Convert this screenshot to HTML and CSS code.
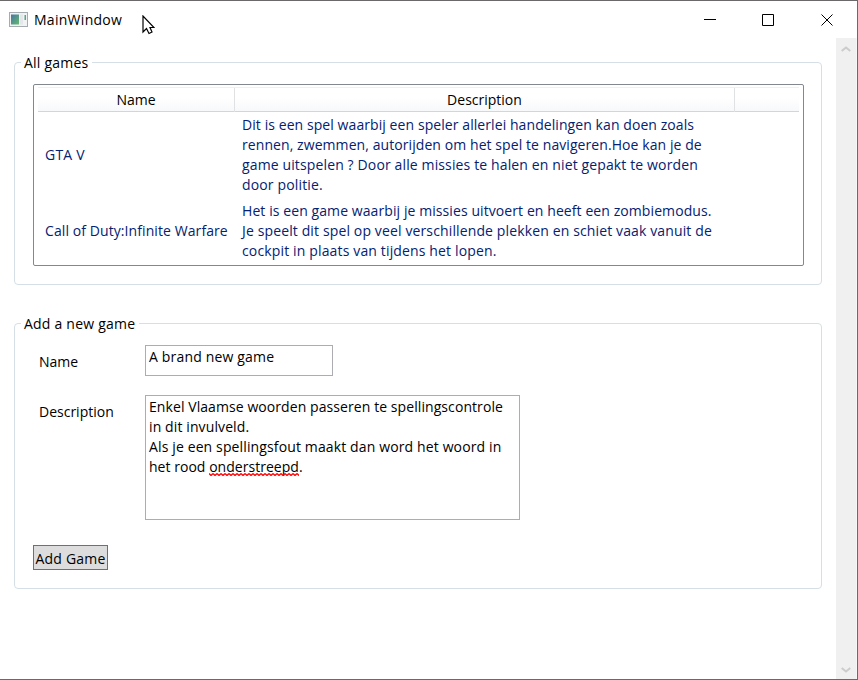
FILE: index.html
```html
<!DOCTYPE html>
<html lang="nl">
<head>
<meta charset="utf-8">
<title>MainWindow</title>
<link rel="stylesheet" href="styles.css">
</head>
<body>
<div class="window">
  <header class="titlebar">
    <svg class="app-icon" width="19" height="15" viewBox="0 0 19 15">
      <defs><linearGradient id="g" x1="0" y1="0" x2="1" y2="1"><stop offset="0" stop-color="#4776a4"/><stop offset="1" stop-color="#64b96e"/></linearGradient></defs>
      <rect x=".5" y=".5" width="18" height="14" fill="#f1f2f3" stroke="#a5abb1"/>
      <rect x="2" y="2.5" width="8" height="10" fill="url(#g)"/>
      <rect x="11" y="2.500" width="3" height="10" fill="#e4e7ea"/>
      <rect x="15.500" y="3" width="1.500" height="5" fill="#58a589"/>
    </svg>
    <span class="title">MainWindow</span>
    <div class="controls">
      <svg width="14" height="14" viewBox="0 0 14 14"><path d="M2 6.500h12"/></svg>
      <svg width="14" height="14" viewBox="0 0 14 14"><path d="M1.500 1.500h11v11h-11z"/></svg>
      <svg width="14" height="14" viewBox="0 0 14 14"><path d="M1.500 1.500l11 11M12.500 1.500l-11 11"/></svg>
    </div>
  </header>
  <div class="body">
    <main class="content">
      <fieldset class="group games">
        <legend>All games</legend>
        <div class="list">
          <div class="row head"><div>Name</div><div>Description</div><div></div></div>
          <div class="row item">
            <div><span class="l0">GTA V</span></div>
            <div class="desc">
              <span class="l1">Dit is een spel waarbij een speler allerlei handelingen kan doen zoals</span>
              <span class="l2">rennen, zwemmen, autorijden om het spel te navigeren.Hoe kan je de</span>
              <span class="l3">game uitspelen ? Door alle missies te halen en niet gepakt te worden</span>
              <span class="l4">door politie.</span>
            </div>
          </div>
          <div class="row item">
            <div><span class="l5">Call of Duty:Infinite Warfare</span></div>
            <div class="desc">
              <span class="l6">Het is een game waarbij je missies uitvoert en heeft een zombiemodus.</span>
              <span class="l7">Je speelt dit spel op veel verschillende plekken en schiet vaak vanuit de</span>
              <span class="l8">cockpit in plaats van tijdens het lopen.</span>
            </div>
          </div>
        </div>
      </fieldset>
      <fieldset class="group add">
        <legend>Add a new game</legend>
        <div class="form">
          <label>Name</label>
          <div class="box name-box"><span class="l9">A brand new game</span></div>
          <label>Description</label>
          <div class="box desc-box">
            <span class="l10">Enkel Vlaamse woorden passeren te spellingscontrole</span>
            <span class="l11">in dit invulveld.</span>
            <span class="l12">Als je een spellingsfout maakt dan word het woord in</span>
            <span class="l13">het rood <span class="typo">onderstreepd<svg class="squiggle" width="90" height="3"><defs><pattern id="wave" width="4" height="3" patternUnits="userSpaceOnUse"><path d="M0 .5L2 2.500L4 .5"/></pattern></defs><rect width="90" height="3" fill="url(#wave)"/></svg></span>.</span>
          </div>
        </div>
        <button class="add-button" type="button">Add Game</button>
      </fieldset>
    </main>
    <aside class="scrollbar">
      <svg width="10" height="6" viewBox="0 0 10 6"><path d="M.7 5L5 1.500L9.300 5"/></svg>
      <svg width="10" height="6" viewBox="0 0 10 6"><path d="M.7 1L5 4.500L9.300 1"/></svg>
    </aside>
  </div>
  <svg class="cursor" width="13" height="20" viewBox="0 0 13 20"><path d="M1 1v16l3.500-3.500 2.500 5 3-1.500-2-4.500h4z"/></svg>
</div>
</body>
</html>
```
FILE: styles.css
```css
* { box-sizing: border-box; }
body {
  margin: 0;
  font: 14px/20px "Open Sans", "Noto Sans", sans-serif;
  color: #000;
  background: #fff;
}
.window {
  position: relative;
  display: flex;
  flex-direction: column;
  width: 858px;
  height: 680px;
  border: solid #6b6969;
  border-width: 1px 1px 1px 0;
  overflow: hidden;
}
.titlebar { display: flex; align-items: center; height: 37px; padding: 0 23px 0 9px; }
.title { margin-left: 6px; letter-spacing: .28px; }
.controls { display: flex; gap: 45px; margin-left: auto; }
.controls path { fill: none; stroke: #000; }
.body { display: flex; flex: 1; }
.content { flex: 1; padding: 15px 14px 0; }
.group {
  min-width: 0;
  margin: 0;
  padding: 0 17px 0 6px;
  border: 1px solid #d5dfe5;
  border-radius: 4px;
}
legend { padding: 0 4px 0 3px; height: 19px; letter-spacing: .22px; }
.games { height: 232px; }
.list {
  width: 771px;
  height: 182px;
  margin: 12px 0 0 12px;
  padding: 2px 4px;
  border: 1px solid #828790;
  border-radius: 2px;
}
.row { display: grid; grid-template-columns: 197px 500px 1fr; }
.head {
  height: 25px;
  border-top: 1px solid #f0f0f0;
  border-bottom: 1px solid #d5d5d5;
  background: linear-gradient(#fff 40%, #f7f8fa);
  text-align: center;
}
.head > div { border-right: 1px solid #dfe1e3; line-height: 24px; }
.head > div:last-child { border: 0; }
.item { color: #042271; align-items: center; padding: 3px 0 0 7px; }
.item + .item { padding-top: 6px; }
.desc, .desc-box { display: flex; flex-direction: column; align-items: flex-start; }
.item span, .box span { white-space: nowrap; }
.add { height: 275px; margin-top: 29px; }
.form {
  display: grid;
  grid-template-columns: 106px 375px;
  grid-template-rows: 31px 125px;
  row-gap: 19px;
  margin: 12px 0 0 18px;
}
.form label { padding-top: 7px; }
.box { border: 1px solid #abadb3; padding: 1px 3px; }
.name-box { width: 188px; }

/* Per-line tracking */
.l0 { letter-spacing: .2px; }
.l1, .l2, .l10 { letter-spacing: .077px; }
.l5, .l6 { letter-spacing: .085px; }
.l11 { letter-spacing: .11px; }
.l3, .l7, .l12 { letter-spacing: .13px; }
.l4, .l8 { letter-spacing: .145px; }
.l9 { letter-spacing: .17px; }
.l13 { letter-spacing: .03px; }

.typo { position: relative; }
.squiggle { position: absolute; left: 0; top: 16px; }
.squiggle path { fill: none; stroke: #f00; stroke-width: 1.3; }
.add-button {
  display: block;
  width: 75px;
  height: 25px;
  margin: 25px 0 0 12px;
  padding: 2px 0 0;
  border: 1px solid #707070;
  background: #ddd;
  font: inherit;
  letter-spacing: .2px;
  color: #000;
  white-space: nowrap;
}
.scrollbar {
  display: flex;
  flex-direction: column;
  align-items: center;
  justify-content: space-between;
  width: 22px;
  padding: 8px 0 6px;
  border-right: 1px solid #f7f7f7;
  background: #f0f0f0;
}
.scrollbar path { fill: none; stroke: #ccc; stroke-width: 2; }
.cursor { position: absolute; left: 142px; top: 14px; }
.cursor path { fill: #fff; stroke: #000; stroke-width: 1.2; }
```
